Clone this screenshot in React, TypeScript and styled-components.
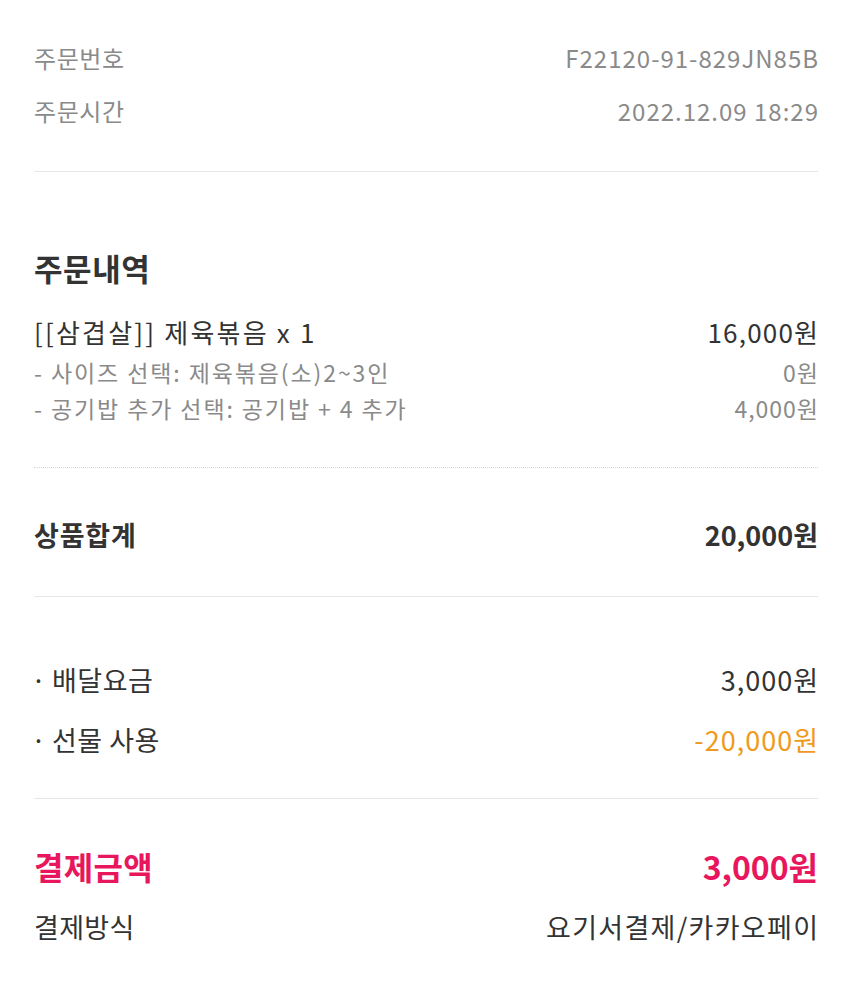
import React from 'react';
import styled, { createGlobalStyle } from 'styled-components';

const GlobalStyle = createGlobalStyle`
    html, body {
        margin: 0;
        padding: 0;
        background: #fff;
    }
    body {
        font-family: 'Noto Sans CJK KR', 'Noto Sans', sans-serif;
        color: #333;
    }
`;

const Page = styled.div`
    width: 850px;
    height: 990px;
    padding: 0 32px 0 34px;
    box-sizing: border-box;
    overflow: hidden;
`;

const Section = styled.section<{ $top: number; $bottom: number }>`
    padding-top: ${(p) => p.$top}px;
    padding-bottom: ${(p) => p.$bottom}px;
`;

const Divider = styled.hr<{ $dotted?: boolean }>`
    margin: 0;
    border: 0;
    border-top: 1px ${(p) => (p.$dotted ? 'dotted #d6d6d6' : 'solid #e6e6e6')};
`;

const Row = styled.div<{ $height: number }>`
    display: flex;
    justify-content: space-between;
    align-items: center;
    height: ${(p) => p.$height}px;
    white-space: nowrap;
`;

const Label = styled.span<{ $size: number; $color?: string; $bold?: boolean; $ls?: number }>`
    font-size: ${(p) => p.$size}px;
    color: ${(p) => p.$color || '#333'};
    font-weight: ${(p) => (p.$bold ? 700 : 400)};
    letter-spacing: ${(p) => p.$ls ?? 0}px;
`;

// 마지막 글자 뒤 letter-spacing 만큼 오른쪽 끝이 밀리지 않게
const Value = styled(Label)`
    margin-right: ${(p) => -(p.$ls ?? 0)}px;
`;

const Heading = styled.h2`
    margin: 0 0 20px;
    height: 40px;
    line-height: 40px;
    font-size: 31px;
    font-weight: 700;
    letter-spacing: 0.6px;
    color: #333;
`;

const Bullet = styled.span`
    display: inline-block;
    width: 18px;
    margin-left: -3px;
    margin-right: 3px;
`;

const GRAY = '#8a8a8a';
const PINK = '#e8175d';
const ORANGE = '#ef9a1a';

export default function App() {
    return (
        <Page>
            <GlobalStyle />
            <Section $top={31} $bottom={34}>
                <Row $height={53}>
                    <Label $size={24} $ls={0.6} $color={GRAY}>주문번호</Label>
                    <Value $size={24} $ls={1} $color={GRAY}>F22120-91-829JN85B</Value>
                </Row>
                <Row $height={53}>
                    <Label $size={24} $ls={0.6} $color={GRAY}>주문시간</Label>
                    <Value $size={24} $ls={1} $color={GRAY}>2022.12.09 18:29</Value>
                </Row>
            </Section>
            <Divider />

            <Section $top={76} $bottom={41}>
                <Heading>주문내역</Heading>
                <Row $height={46}>
                    <Label $size={26} $ls={2.2}>[[삼겹살]] 제육볶음 x 1</Label>
                    <Value $size={26} $ls={1.2}>16,000원</Value>
                </Row>
                <Row $height={36}>
                    <Label $size={23} $ls={1.9} $color={GRAY}>- 사이즈 선택: 제육볶음(소)2~3인</Label>
                    <Value $size={23} $ls={1} $color={GRAY}>0원</Value>
                </Row>
                <Row $height={36}>
                    <Label $size={23} $ls={1.9} $color={GRAY}>- 공기밥 추가 선택: 공기밥 + 4 추가</Label>
                    <Value $size={23} $ls={1} $color={GRAY}>4,000원</Value>
                </Row>
            </Section>
            <Divider $dotted />

            <Section $top={46} $bottom={42}>
                <Row $height={40}>
                    <Label $size={27} $ls={0.8} $bold>상품합계</Label>
                    <Value $size={27} $bold>20,000원</Value>
                </Row>
            </Section>
            <Divider />

            <Section $top={52} $bottom={29}>
                <Row $height={60}>
                    <Label $size={27} $ls={0.5}><Bullet>·</Bullet>배달요금</Label>
                    <Value $size={27} $ls={1}>3,000원</Value>
                </Row>
                <Row $height={60}>
                    <Label $size={27} $ls={0.5}><Bullet>·</Bullet>선물 사용</Label>
                    <Value $size={27} $ls={1} $color={ORANGE}>-20,000원</Value>
                </Row>
            </Section>
            <Divider />

            <Section $top={37} $bottom={0}>
                <Row $height={60}>
                    <Label $size={32} $ls={0.3} $color={PINK} $bold>결제금액</Label>
                    <Value $size={32} $color={PINK} $bold>3,000원</Value>
                </Row>
                <Row $height={61}>
                    <Label $size={27} $ls={0.3}>결제방식</Label>
                    <Value $size={27} $ls={1.3}>요기서결제/카카오페이</Value>
                </Row>
            </Section>
        </Page>
    );
}
